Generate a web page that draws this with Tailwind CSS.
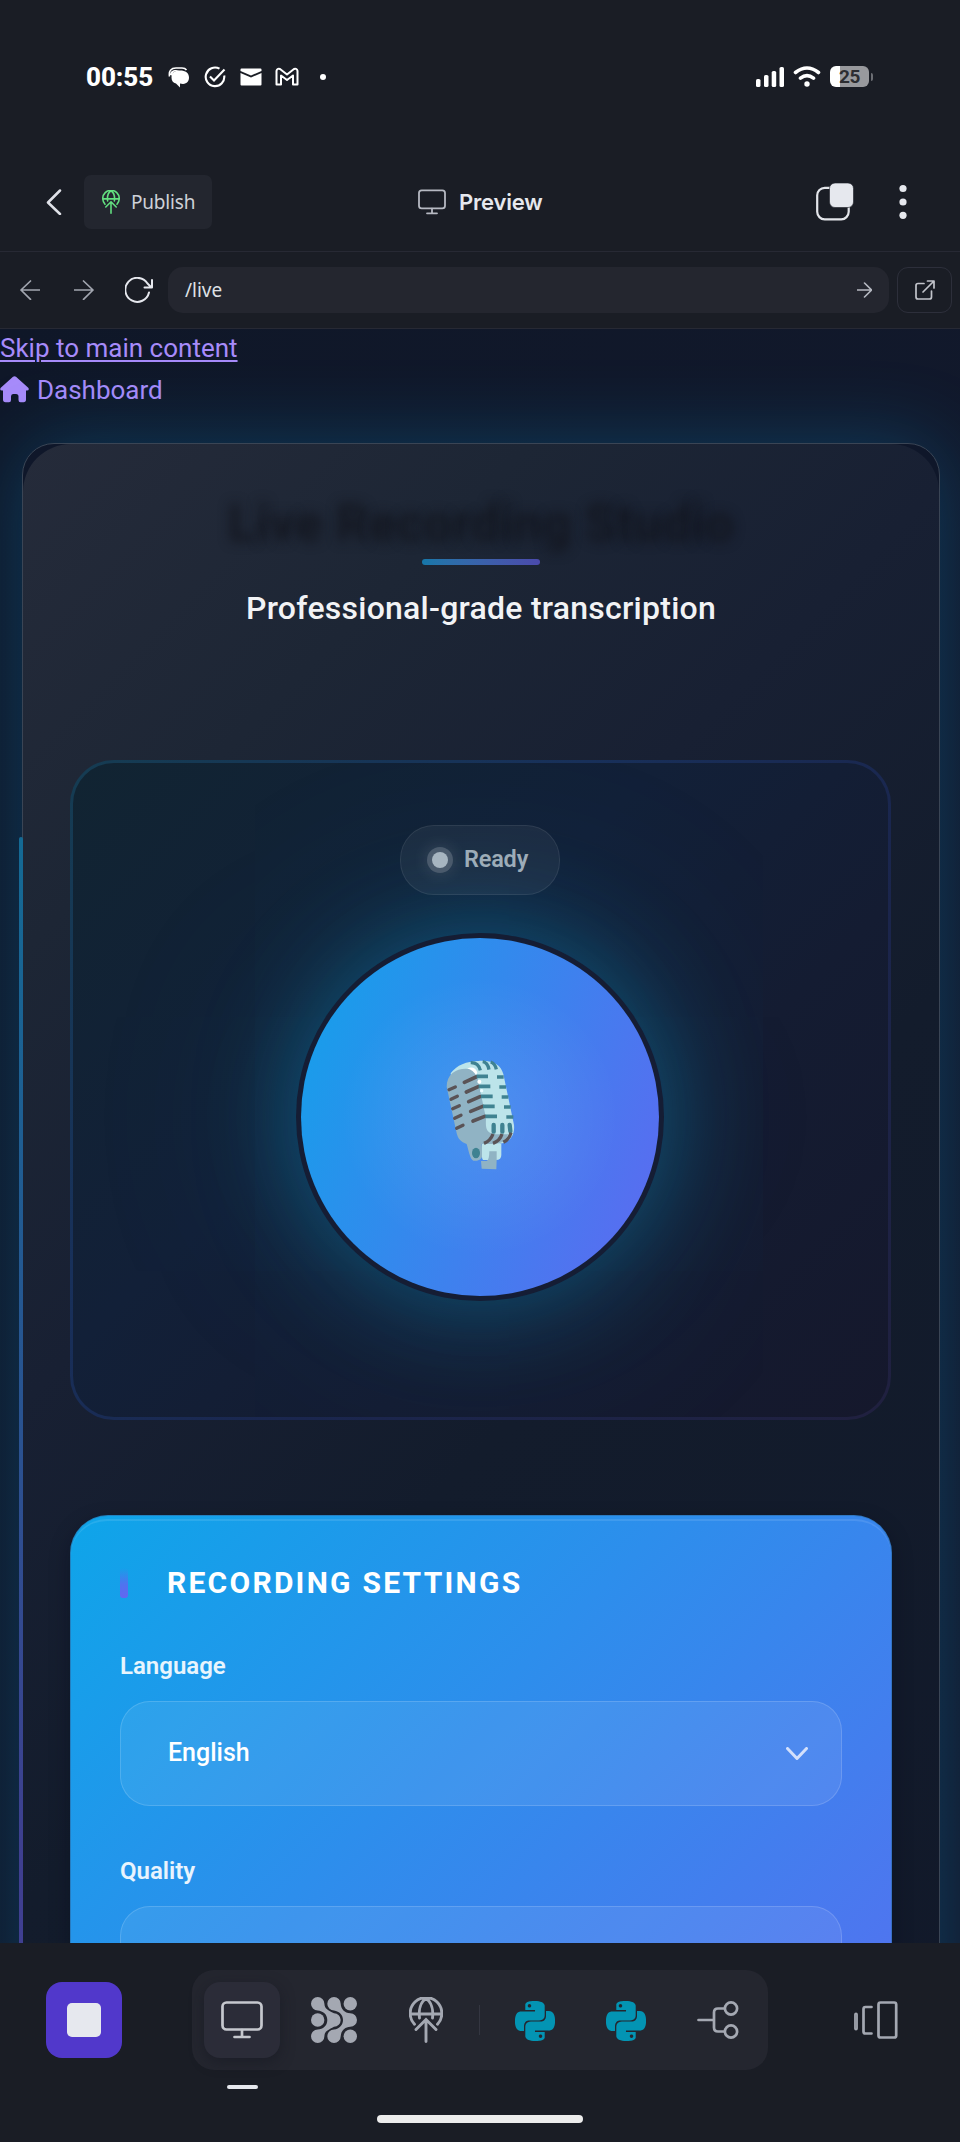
<!DOCTYPE html>
<html lang="en">
<head>
<meta charset="utf-8">
<title>Live Recording Studio</title>
<script src="https://cdn.jsdelivr.net/npm/@tailwindcss/browser@4"></script>
</head>
<body class="w-[960px] h-[2142px] overflow-hidden bg-[#1a1d25] flex flex-col font-['Roboto',sans-serif] text-white">
<svg class="hidden">
  <symbol id="globe" viewBox="0 0 34 46"><g fill="none" stroke="currentColor" stroke-linecap="round"><path d="M5.5 27.2A15.8 15.8 0 1 1 28.5 27.2M1.5 17H32.5M10.5 21C9.5 13 11.5 5 17 1.5C22.500 5 24.500 13 23.500 21M17 24V44.500M7 32.500L17 22.500L27 32.500"/></g></symbol>
  <symbol id="monitor" viewBox="0 0 42 38"><g fill="none" stroke="currentColor" stroke-width="2.700" stroke-linecap="round"><rect x="1.500" y="1.500" width="39" height="27" rx="4"/><path d="M21 29V36M13.500 36H28.500"/></g></symbol>
  <symbol id="python" viewBox="0 0 24 24"><path fill="currentColor" d="M14.25.18l.9.2.73.26.59.3.45.32.34.34.25.34.16.33.1.3.04.26.02.2-.01.13V8.5l-.05.63-.13.55-.21.46-.26.38-.3.31-.33.25-.35.19-.35.14-.33.1-.3.07-.26.04-.21.02H8.77l-.69.05-.59.14-.5.22-.41.27-.33.32-.27.35-.2.36-.15.37-.1.35-.07.32-.04.27-.02.21v3.06H3.17l-.21-.03-.28-.07-.32-.12-.35-.18-.36-.26-.36-.36-.35-.46-.32-.59-.28-.73-.21-.88-.14-1.05-.05-1.23.06-1.22.16-1.04.24-.87.32-.71.36-.57.4-.44.42-.33.42-.24.4-.16.36-.1.32-.05.24-.01h.16l.06.01h8.16v-.83H6.18l-.01-2.75-.02-.37.05-.34.11-.31.17-.28.25-.26.31-.23.38-.2.44-.18.51-.15.58-.12.64-.1.71-.06.77-.04.84-.02 1.27.05zm-6.3 1.98l-.23.33-.08.41.08.41.23.34.33.22.41.09.41-.09.33-.22.23-.34.08-.41-.08-.41-.23-.33-.33-.22-.41-.09-.41.09zm13.09 3.95l.28.06.32.12.35.18.36.27.36.35.35.47.32.59.28.73.21.88.14 1.04.05 1.23-.06 1.23-.16 1.04-.24.86-.32.71-.36.57-.4.45-.42.33-.42.24-.4.16-.36.09-.32.05-.24.02-.16-.01h-8.22v.82h5.84l.01 2.76.02.36-.05.34-.11.31-.17.29-.25.25-.31.24-.38.2-.44.17-.51.15-.58.13-.64.09-.71.07-.77.04-.84.01-1.27-.04-1.07-.14-.9-.2-.73-.25-.59-.3-.45-.33-.34-.34-.25-.34-.16-.33-.1-.3-.04-.25-.02-.2.01-.13v-5.34l.05-.64.13-.54.21-.46.26-.38.3-.32.33-.24.35-.2.35-.14.33-.1.3-.06.26-.04.21-.02.13-.01h5.84l.69-.05.59-.14.5-.21.41-.28.33-.32.27-.35.2-.36.15-.36.1-.35.07-.32.04-.28.02-.21V6.07h2.09l.14.01zm-6.47 14.25l-.23.33-.08.41.08.41.23.33.33.23.41.08.41-.08.33-.23.23-.33.08-.41-.08-.41-.23-.33-.33-.23-.41-.08-.41.08z"/></symbol>
</svg>

<!-- Status bar -->
<div class="h-[153px] shrink-0 flex items-center pl-[86px] pr-[87px]">
  <span class="w-[66px] font-extrabold text-[26px] tracking-[-0.1px] leading-none whitespace-nowrap">00:55</span>
  <svg class="w-[22px] h-[22px] ml-[16px]" viewBox="0 0 22 22" fill="#fff"><path d="M12 4.5C17.500 4.500 21 7 21 11.500C21 15 19 17.500 15 18L12 17.500L12 21.500L8 17.500C5 17 3.500 14.500 3.500 11.500C3.500 7 6 4.500 12 4.500Z"/><path d="M1.500 10.500C.5 5 3 2 8 2H14C16 2 17.500 2.500 18.500 4" fill="none" stroke="#fff" stroke-width="1.500"/><path d="M2 9C2 5.500 4.500 4 8 4H11L5.500 6L4 9.500Z"/></svg>
  <svg class="w-[22px] h-[22px] ml-[14px]" viewBox="0 0 22 22" fill="none" stroke="#fff" stroke-width="2.100"><path d="M15.500 2.700A9.300 9.300 0 1 0 20.200 9.500M6 10.500L10 14.500L20.500 3.500"/></svg>
  <svg class="w-[22px] h-[22px] ml-[14px]" viewBox="0 0 22 22" fill="#fff"><path d="M.5 3.500Q.5 2.500 1.500 2.500H20.500Q21.500 2.500 21.500 3.500V5L11 9.500L.5 5ZM.5 7L11 11.500L21.500 7V18.500Q21.500 19.500 20.500 19.500H1.500Q.5 19.500 .5 18.500Z"/></svg>
  <svg class="w-[24px] h-[22px] ml-[13px]" viewBox="0 0 24 22" fill="none" stroke="#fff" stroke-width="2" stroke-linejoin="round"><path d="M1.500 18.500V5Q2 2 5 3L12 8.500L19 3Q22 2 22.500 5V18.500H18V9.500L12 14L6 9.500V18.500Z"/></svg>
  <span class="w-[6px] h-[6px] rounded-full bg-white ml-[21px]"></span>
  <div class="grow"></div>
  <svg class="w-[28px] h-[20px]" viewBox="0 0 28 20" fill="#fff"><rect x="0" y="12" width="4.500" height="8" rx="1.600"/><rect x="8" y="8" width="4.500" height="12" rx="1.600"/><rect x="15.700" y="4" width="4.500" height="16" rx="1.600"/><rect x="23.500" y="0" width="4.500" height="20" rx="1.600"/></svg>
  <svg class="w-[28px] h-[21px] ml-[9px]" viewBox="0 0 28 21" fill="none" stroke="#fff" stroke-width="3.600" stroke-linecap="round"><path d="M2.500 6.500Q14 -2.500 25.500 6.500M7.500 12.200Q14 7 20.500 12.200"/><circle cx="14" cy="18" r="2.700" fill="#fff" stroke="none"/></svg>
  <div class="w-[39px] h-[21px] ml-[9px] rounded-[6px] bg-[linear-gradient(90deg,#fff_26%,#98999d_26%)] flex items-center justify-center text-[#2c2d31] font-bold text-[19px] leading-none tracking-[-0.3px]">25</div>
  <span class="w-[2px] h-[8px] rounded-r bg-[#6c6e74] ml-[2px]"></span>
</div>

<!-- App header -->
<header class="h-[99px] shrink-0 flex items-center border-b border-[#272934] pl-[46px] pr-[53px] text-[#e6e8ee]">
  <svg class="w-[16px] h-[26px]" viewBox="0 0 16 26" fill="none" stroke="#dfe1e8" stroke-width="2.500" stroke-linecap="round" stroke-linejoin="round"><path d="M14 1.500L2 13.500L14 25"/></svg>
  <div class="w-[128px] h-[54px] ml-[22px] rounded-[7px] bg-[#23262f] flex items-center pl-[18px] text-[#cfd1d8]">
    <svg class="w-[18px] h-[24px] text-[#63e080]" stroke-width="3"><use href="#globe"/></svg>
    <span class="ml-[11px] font-['Noto_Sans'] text-[19px] tracking-[-0.2px] whitespace-nowrap">Publish</span>
  </div>
  <svg class="w-[28px] h-[26px] ml-[206px] text-[#b6b9c2]"><use href="#monitor"/></svg>
  <span class="ml-[13px] w-[84px] font-['Inter'] font-semibold text-[22px] tracking-[-0.2px] whitespace-nowrap">Preview</span>
  <div class="grow"></div>
  <svg class="w-[38px] h-[38px]" viewBox="0 0 38 38"><rect x="1.200" y="4.800" width="31.500" height="31.500" rx="7.500" fill="none" stroke="#e3e5ea" stroke-width="2.200"/><rect x="13.500" y="0" width="24" height="24.500" rx="5.500" fill="#e6e8ee" stroke="#1a1d25" stroke-width=".6"/></svg>
  <svg class="w-[8px] h-[36px] ml-[45px]" viewBox="0 0 8 36" fill="#e6e8ee"><circle cx="4" cy="4.500" r="3.600"/><circle cx="4" cy="18" r="3.600"/><circle cx="4" cy="31.300" r="3.600"/></svg>
</header>

<!-- Address bar -->
<div class="h-[77px] shrink-0 flex items-center border-b border-[#272934] pl-[20px] pr-[8px]">
  <svg class="w-[20px] h-[20px]" viewBox="0 0 20 20" fill="none" stroke="#a2a6b0" stroke-width="1.700" stroke-linecap="round" stroke-linejoin="round"><path d="M19.500 10H1M10.500 1L1 10L10.500 19.300"/></svg>
  <svg class="w-[20px] h-[20px] ml-[34px]" viewBox="0 0 20 20" fill="none" stroke="#a2a6b0" stroke-width="1.700" stroke-linecap="round" stroke-linejoin="round"><path d="M.5 10H19M9.500 1L19 10L9.500 19.300"/></svg>
  <svg class="w-[28px] h-[26px] ml-[31px]" viewBox="0 0 28 26" fill="none" stroke="#e6e8ee" stroke-width="2" stroke-linecap="round" stroke-linejoin="round"><path d="M24 15.500A12 12 0 1 1 22.500 6.500L26.500 10.500M27 3V10.500H19.500"/></svg>
  <div class="w-[721px] h-[46px] ml-[15px] rounded-[15px] bg-[#24262f] flex items-center justify-between pl-[17px] pr-[17px]">
    <span class="font-['Noto_Sans'] text-[19px] text-[#dfe1e6]">/live</span>
    <svg class="w-[15px] h-[16px]" viewBox="0 0 15 16" fill="none" stroke="#b6b9c2" stroke-width="1.600" stroke-linecap="round" stroke-linejoin="round"><path d="M.5 8H14.500M7.500 1L14.500 8L7.500 15"/></svg>
  </div>
  <div class="w-[55px] h-[46px] ml-[8px] rounded-[11px] border border-[#2d2f3b] flex items-center justify-center">
    <svg class="w-[20px] h-[20px]" viewBox="0 0 20 20" fill="none" stroke="#c2c4cb" stroke-width="1.700" stroke-linecap="round" stroke-linejoin="round"><path d="M9 3.500H3Q1 3.500 1 5.500V17Q1 19 3 19H14.500Q16.500 19 16.500 17V11M8 12L18.500 1.500M12.500 1H19V8"/></svg>
  </div>
</div>

<!-- Previewed page -->
<main class="h-[1614px] shrink-0 overflow-hidden bg-[linear-gradient(100deg,#0f1728,#12192c)] text-[#a78bfa]">
  <div class="h-[40px] pt-[3px]"><a class="block w-[237px] text-[26px] leading-[32px] tracking-[0px] whitespace-nowrap underline decoration-2 underline-offset-[3px]">Skip to main content</a></div>
  <div class="h-[74px] flex items-start">
    <svg class="w-[29px] h-[27px] mt-[7px]" viewBox="0 0 29 27" fill="currentColor"><path d="M13 .7Q14.500-.4 16 .7L28.500 12Q29.500 14.500 27 14.500H26V23.500Q26 26.300 23.500 26.300H20.500Q18.500 26.300 18.500 24V20.500Q18.500 18 16 18H13Q11 18 11 20.500V24Q11 26.300 9 26.300H5.500Q3 26.300 3 23.500V14.500H2Q-.5 14.500 .5 12Z"/></svg>
    <span class="ml-[8px] mt-[5px] text-[26px] leading-[32px] whitespace-nowrap">Dashboard</span>
  </div>

  <section class="relative w-[918px] h-[1900px] ml-[22px] rounded-[32px] border border-[#3a4555] bg-[#0f172a] shadow-[0_0_80px_rgba(14,145,213,0.3)]">
    <div class="absolute left-[-4px] top-[393px] w-[4px] h-[1507px] rounded-t-[2px] bg-[linear-gradient(180deg,#146a94,#2a5290_40%,#3f3f8f_68%,#43409a)]"></div>
    <div class="w-full h-full rounded-[48px] bg-[linear-gradient(135deg,#252b3a_0%,#1d2635_18%,#182033_34%,#131c2c_52%,#111829_100%)] pt-[46px] px-[47px]">
      <h1 class="text-center text-transparent font-bold text-[51.5px] leading-[60px] tracking-[0px] whitespace-nowrap [text-shadow:0_4px_12px_rgba(18,20,28,0.85)]">Live Recording Studio</h1>
      <div class="w-[118px] h-[6px] rounded-full mx-auto mt-[9px] bg-linear-to-r from-[#1577a9] to-[#4a4aac]"></div>
      <p class="text-center text-[#f2f3f5] font-medium text-[32px] leading-[40px] tracking-[0.25px] mt-[23px] whitespace-nowrap">Professional-grade transcription</p>

      <div class="w-[821px] h-[660px] mt-[132px] rounded-[44px] p-[3px] bg-[linear-gradient(135deg,#153c52,#18305a_35%,#1a264e_60%,#20203f)]">
        <div class="w-full h-full rounded-[41px] overflow-hidden bg-[linear-gradient(135deg,#112432,#122038_40%,#141c32_65%,#15182c)] flex flex-col items-center pt-[62px] pr-[1px]">
          <div class="relative z-10 w-[160px] h-[70px] rounded-[34px] bg-white/5 border border-white/8 flex items-center pl-[26px] text-[#9dacb8]">
            <span class="w-[26px] h-[26px] rounded-full bg-[#4a5a6c] flex items-center justify-center shadow-[0_0_18px_rgba(255,255,255,0.13)]"><span class="w-[16px] h-[16px] rounded-full bg-[#a7b5c0]"></span></span>
            <span class="ml-[11px] font-semibold text-[23.500px] leading-none tracking-[-0.2px]">Ready</span>
          </div>
          <div class="w-[368px] h-[368px] mt-[38px] rounded-full p-[5px] bg-[#151d34] shadow-[0_0_100px_rgba(14,145,195,0.45),0_0_220px_rgba(14,145,195,0.2)]">
            <div class="w-full h-full rounded-full bg-[radial-gradient(circle,rgba(255,255,255,0.1),transparent_55%),linear-gradient(112deg,#12a2ea,#5f68f1)] flex items-center justify-center">
              <svg class="w-[70px] h-[110px] mb-[4px]" viewBox="555 480 210 330">
                <path fill="#bce4ea" d="M572 520C590 495 620 484 655 483C700 480 722 495 730 522L762 675C765 705 750 733 705 732L600 700Z"/>
                <path fill="#90b3c4" d="M560 560C560 515 600 500 635 508C650 515 652 530 656 550L678 655C676 690 680 698 705 703L745 703Q735 732 700 732H665L668 760C668 780 655 784 640 782C630 778 626 752 620 732C600 725 594 715 590 700Z"/>
                <path fill="#bce4ea" d="M666 732H724V765Q724 780 708 780H672Q666 780 666 770Z"/>
                <path fill="#90b3c4" d="M688 754H710V780L709 808L665 806L663 783H680Q688 780 688 754Z"/>
                <path fill="#fff" d="M622 505Q645 497 652 518L648 525Q640 512 622 505Z"/><circle cx="658" cy="545" r="6" fill="#fff"/><circle cx="665" cy="572" r="5" fill="#e9fbff"/>
                <g fill="none" stroke="#5a5356" stroke-width="11" stroke-linecap="round"><path d="M613 547L648 531M619 576L655 560M626 605L660 590M632 634L668 619M639 663L674 649"/><path stroke-width="10" d="M567 569L586 561M573 598L592 589M578 626L598 617M584 655L603 646M590 685L609 676"/></g>
                <g fill="none" stroke="#3f8291" stroke-width="11"><path d="M650 529H684M656 559H691M663 589H698M669 619H704M676 649H711M711 531H731M718 561H738M725 591H745M732 621H752M739 651H760"/><path stroke-width="10" d="M632 488Q655 487 661 511M668 485Q683 487 687 509M692 486Q705 490 709 508"/><path stroke-width="13" stroke-linecap="round" d="M701 675V695M727 675V695M749 675L751 693"/></g>
                <g fill="none" stroke="#5a5356" stroke-width="10"><path d="M699 702Q692 722 672 730M726 702Q720 722 699 730M753 698Q749 717 730 727"/></g>
                <ellipse cx="648" cy="759" rx="12" ry="16" fill="#3f8291"/>
              </svg>
            </div>
          </div>
        </div>
      </div>

      <div class="relative w-[822px] h-[830px] mt-[95px] rounded-[38px] border border-[#2b6ca5]/60 bg-[linear-gradient(135deg,#0ea5e9,#6366f1)] bg-origin-border px-[49px] pt-[49px] text-white shadow-[0_8px_20px_rgba(5,10,25,0.35)]">
        <div class="absolute inset-x-0 top-[3px] h-[60px] rounded-t-[36px] border-t-2 border-white/10"></div>
        <div class="flex items-center h-[36px]">
          <span class="w-[8px] h-[30px] rounded-[3px] bg-[linear-gradient(180deg,transparent,#4f73ef_55%,#6366f1)]"></span>
          <h2 class="ml-[39px] font-bold text-[30px] leading-[36px] tracking-[2.25px] whitespace-nowrap">RECORDING SETTINGS</h2>
        </div>
        <p class="mt-[49px] font-semibold text-[24px] leading-[32px] text-white/90">Language</p>
        <div class="h-[105px] mt-[19px] rounded-[30px] border border-white/15 bg-white/8 flex items-center justify-between pl-[47px] pr-[33px]">
          <span class="font-medium text-[25px] mb-[2px]">English</span>
          <svg class="w-[22px] h-[14px]" viewBox="0 0 22 14" fill="none" stroke="#d3e0fb" stroke-width="3" stroke-linecap="round" stroke-linejoin="round"><path d="M1.500 1.500L11 11.500L20.500 1.500"/></svg>
        </div>
        <p class="mt-[49px] font-semibold text-[24px] leading-[32px] text-white/90">Quality</p>
        <div class="h-[105px] mt-[19px] rounded-[30px] border border-white/15 bg-white/8"></div>
      </div>
    </div>
  </section>
</main>

<!-- Bottom toolbar -->
<nav class="relative grow flex items-start pt-[27px] pl-[46px] text-[#a4a8b2]">
  <div class="w-[76px] h-[76px] mt-[12px] rounded-[16px] bg-[#5138cb] flex items-center justify-center"><span class="w-[34px] h-[34px] rounded-[5px] bg-[#e6e8ee]"></span></div>
  <div class="w-[576px] h-[100px] ml-[70px] rounded-[22px] bg-[#24262f] flex items-center pl-[12px]">
    <div class="w-[76px] h-[76px] rounded-[16px] bg-[#2b2c38] shadow-[0_4px_14px_rgba(20,22,32,0.5)] flex items-center justify-center text-[#c6c8ce]"><svg class="w-[42px] h-[38px]"><use href="#monitor"/></svg></div>
    <svg class="w-[46px] h-[46px] ml-[31px]" viewBox="0 0 46 46" fill="currentColor">
      <path d="M6.700 0A6.700 6.700 0 0 1 13.400 6.700C13.600 12 17 13 23 16.300A6.700 6.700 0 0 1 23 29.700C17 33 13.600 34 13.400 39.300A6.700 6.700 0 1 1 6.700 32.600C12 32 16.300 29 16.300 23C16.300 17 12 14 6.700 13.400A6.700 6.700 0 0 1 6.700 0Z"/>
      <path d="M23 0A6.700 6.700 0 0 1 29.700 6.700C30 12 33.500 16 39.300 16.300A6.700 6.700 0 0 1 39.300 29.700C33.500 30 30 34 29.700 39.300A6.700 6.700 0 1 1 23 32.600C28.500 31.800 32 28 32 23C32 18 28.500 14.200 23 13.400A6.700 6.700 0 0 1 23 0Z"/>
      <circle cx="39.300" cy="6.700" r="6.700"/><circle cx="6.700" cy="23" r="6.700"/><circle cx="39.300" cy="39.300" r="6.700"/>
    </svg>
    <svg class="w-[34px] h-[46px] ml-[52px]" stroke-width="2.900"><use href="#globe"/></svg>
    <span class="w-[1px] h-[30px] ml-[36px] bg-[#343641]"></span>
    <svg class="w-[40px] h-[40px] ml-[35px] mt-[2px] text-[#0394b3]"><use href="#python"/></svg>
    <svg class="w-[40px] h-[40px] ml-[51px] mt-[2px] text-[#0394b3]"><use href="#python"/></svg>
    <svg class="w-[42px] h-[38px] ml-[51px]" viewBox="0 0 42 38" fill="none" stroke="currentColor" stroke-width="2.700" stroke-linecap="round"><path d="M1.500 19H17M27 7.500H21Q17 7.500 17 11.500V26.500Q17 30.500 21 30.500H27"/><circle cx="34" cy="7.500" r="6.100"/><circle cx="34" cy="30.500" r="6.100"/></svg>
  </div>
  <svg class="w-[44px] h-[38px] ml-[86px] mt-[31px]" viewBox="0 0 44 38" fill="none" stroke="currentColor" stroke-width="2.700" stroke-linecap="round" stroke-linejoin="round"><rect x="24.500" y="1.500" width="17.700" height="35" rx="2"/><path d="M17.500 6H11.500Q9.500 6 9.500 8V30.500Q9.500 32.500 11.500 32.500H17.500"/><rect x="1" y="12.500" width="2" height="16" rx="1" stroke-width="1.800"/></svg>
  <div class="absolute left-[227px] top-[142px] w-[31px] h-[4px] rounded-full bg-[#e6e8ee]"></div>
  <div class="absolute left-[377px] top-[172px] w-[206px] h-[8px] rounded-full bg-[#ececec]"></div>
</nav>
</body>
</html>
